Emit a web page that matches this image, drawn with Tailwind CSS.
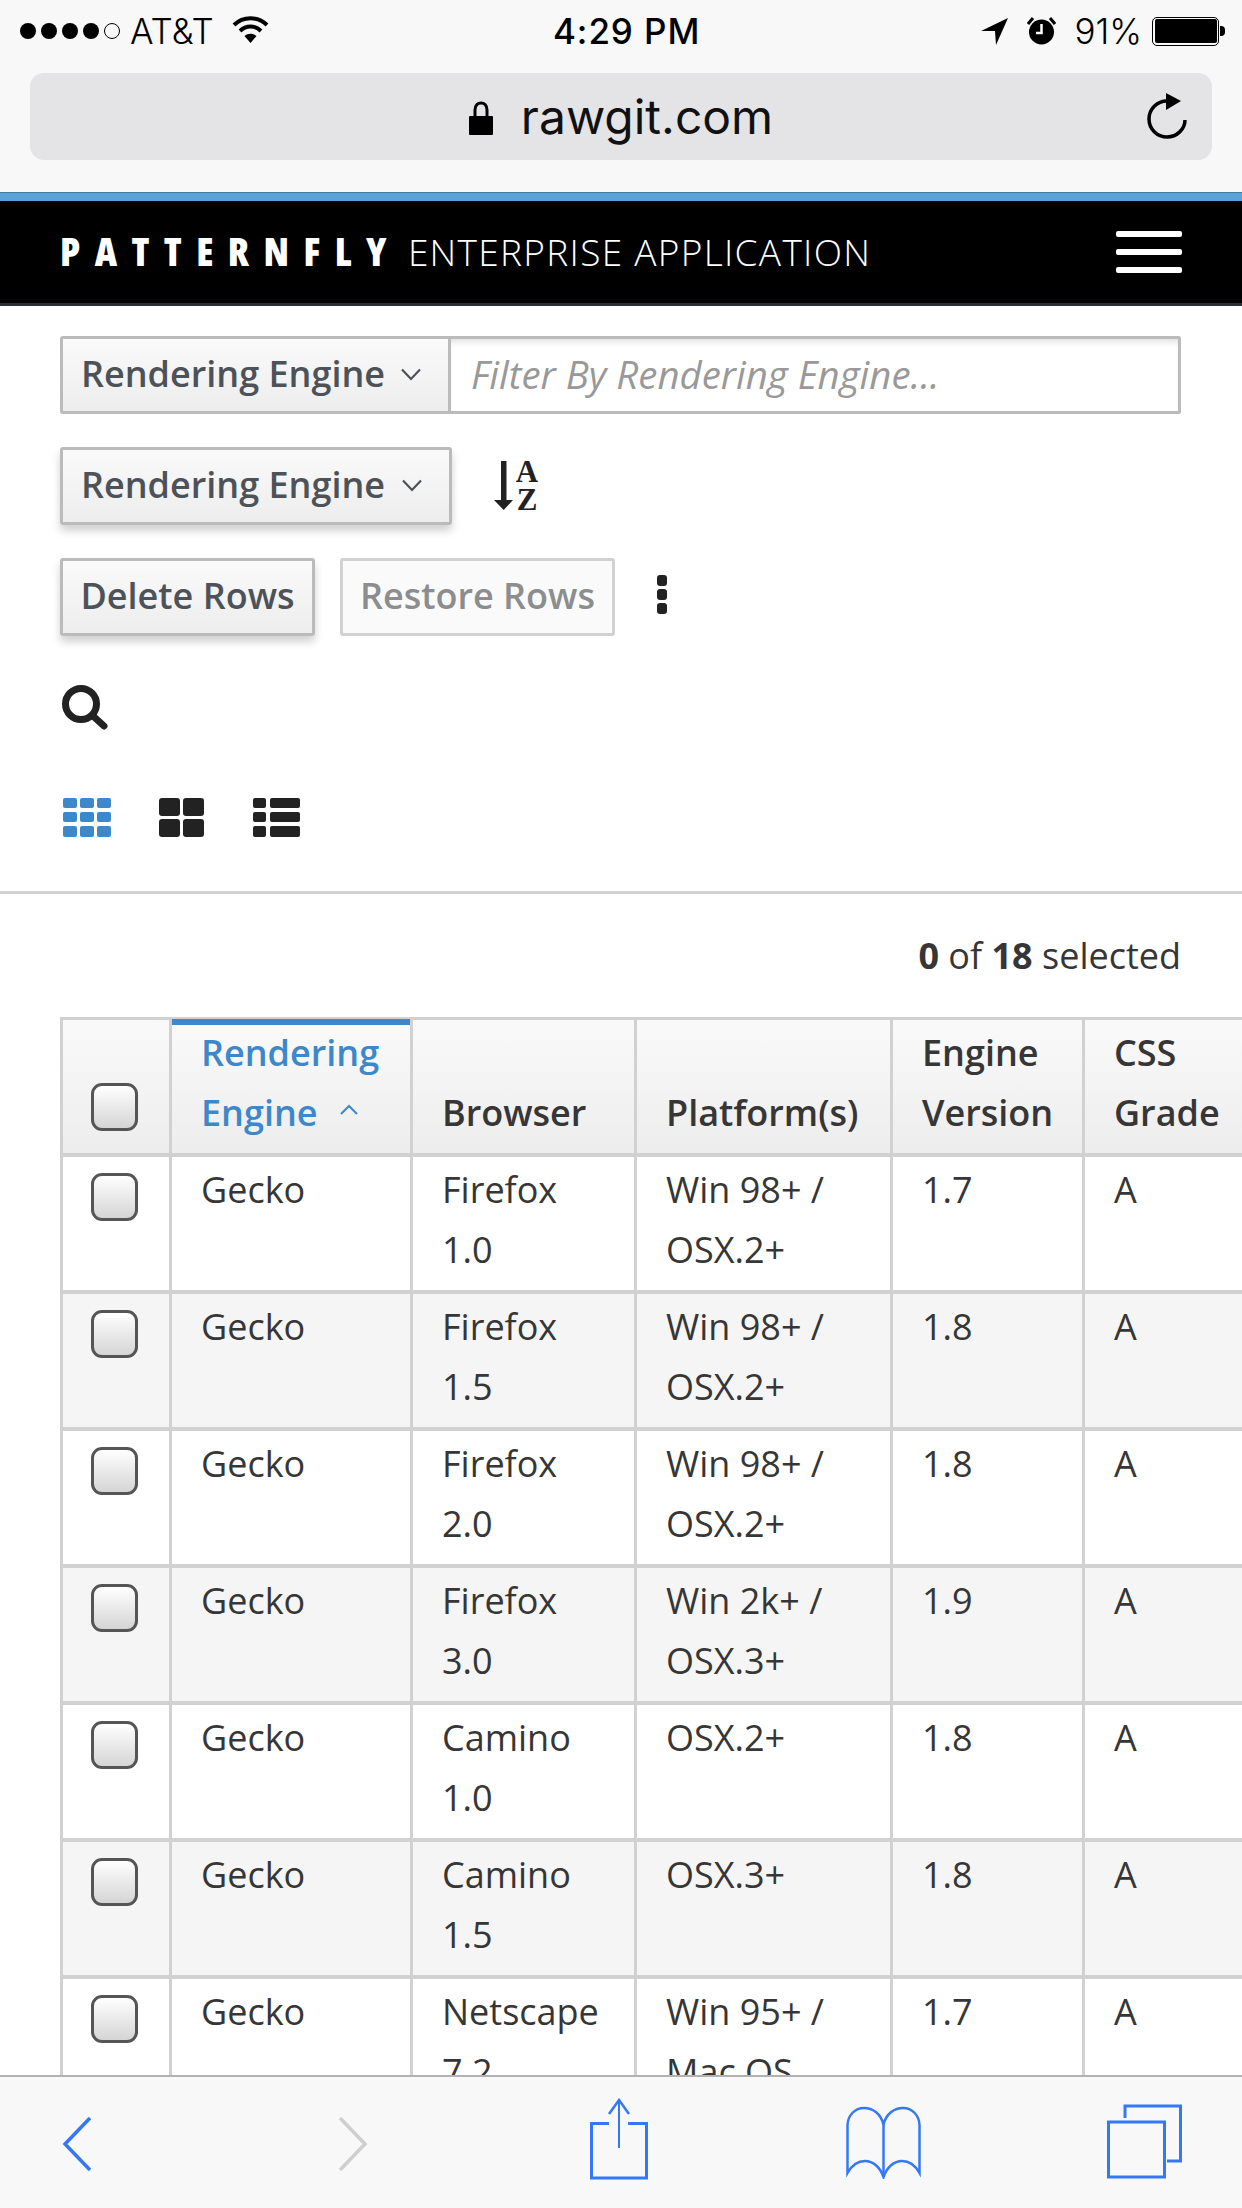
<!DOCTYPE html>
<html lang="en">
<head>
    <meta charset="UTF-8">
    <meta name="viewport" content="width=device-width, initial-scale=1.0">
    <title>Patternfly Table View</title>
    <script src="https://cdn.jsdelivr.net/npm/@tailwindcss/browser@4"></script>
</head>
<body class="bg-white font-['Open_Sans',sans-serif] text-[36px] leading-[60px] text-[#363636]">
<div class="w-[1242px] h-[2208px] flex flex-col overflow-hidden">

    <!-- safari top chrome -->
    <div class="h-[192px] shrink-0 bg-[#f8f8f8] font-['Inter',sans-serif] text-black">
        <div class="h-[62px] relative flex items-center justify-between pl-[20px] pr-[17px] text-[35px] leading-[40px]">
            <div class="flex items-center">
                <div class="flex gap-[5px]">
                    <span class="w-[16px] h-[16px] rounded-full bg-black"></span>
                    <span class="w-[16px] h-[16px] rounded-full bg-black"></span>
                    <span class="w-[16px] h-[16px] rounded-full bg-black"></span>
                    <span class="w-[16px] h-[16px] rounded-full bg-black"></span>
                    <span class="w-[16px] h-[16px] rounded-full border border-black"></span>
                </div>
                <span class="ml-[10px] font-light">AT&amp;T</span>
                <svg class="ml-[18px] mb-[3px]" width="37" height="28" viewBox="0 0 37 28" fill="none" stroke="black" stroke-width="4">
                    <path d="M2 9 C11 0 26 0 35 9"/>
                    <path d="M8 15 C14 9 23 9 29 15"/>
                    <path d="M18.5 27 L12.5 20 C16 17 21 17 24.5 20 Z" fill="black" stroke="none"/>
                </svg>
            </div>
            <span class="absolute left-[553px] font-medium tracking-[0.9px]">4:29 PM</span>
            <div class="flex items-center">
                <svg width="27" height="27" viewBox="0 0 27 27"><path d="M0 13 L27 0 L15 27 L14 13 Z" fill="black"/></svg>
                <svg class="ml-[19px]" width="29" height="28" viewBox="0 0 29 28">
                    <circle cx="14.5" cy="15" r="12.5" fill="black"/>
                    <path d="M14.5 7 V16 H9" fill="none" stroke="white" stroke-width="2.5"/>
                    <path d="M1 7 L6 1 M28 7 L23 1" stroke="black" stroke-width="3"/>
                </svg>
                <span class="ml-[18px] font-light">91%</span>
                <div class="ml-[10px] w-[67px] h-[29px] border-[1.5px] border-black rounded-[5px] p-[1.5px]">
                    <div class="w-full h-full bg-black rounded-[2px]"></div>
                </div>
                <div class="ml-px w-[5px] h-[10px] bg-black rounded-r-[4px]"></div>
            </div>
        </div>
        <div class="mt-[11px] mx-[30px] h-[87px] relative rounded-[14px] bg-[#e4e4e6] flex items-center justify-center">
            <svg class="mr-[28px] mt-[2px]" width="24" height="34" viewBox="0 0 24 34">
                <path d="M6 17 V9 C6 -0.5 18 -0.5 18 9 V17" fill="none" stroke="black" stroke-width="3"/>
                <rect x="0" y="15" width="24" height="19" rx="1" fill="black"/>
            </svg>
            <span class="text-[48px] leading-[60px] text-[#111]">rawgit.com</span>
            <svg class="absolute right-[25px] top-[20px]" width="40" height="46" viewBox="0 0 40 46" fill="none" stroke="black" stroke-width="3.5">
                <path d="M20 8 C10 8 2 16 2 26 C2 36 10 44 20 44 C30 44 38 36 38 27"/>
                <path d="M19 0 L34 8 L19 17 Z" fill="black" stroke="none"/>
            </svg>
        </div>
    </div>

    <!-- masthead -->
    <div class="h-[9px] shrink-0 bg-[#5aa3d8] border-t border-[#44789e]"></div>
    <div class="h-[105px] shrink-0 bg-black border-b-[3px] border-[#292e34] pl-[60px] pr-[60px] flex items-center justify-between text-white">
        <div class="flex items-baseline mb-[1px]">
            <span class="font-extrabold text-[39px] [font-stretch:75%] tracking-[14.4px]">PATTERNFLY</span>
            <span class="ml-[7px] font-light text-[37px] tracking-[1.3px]">ENTERPRISE APPLICATION</span>
        </div>
        <div class="flex flex-col gap-[12px]">
            <span class="w-[66px] h-[6px] rounded-[2px] bg-white"></span>
            <span class="w-[66px] h-[6px] rounded-[2px] bg-white"></span>
            <span class="w-[66px] h-[6px] rounded-[2px] bg-white"></span>
        </div>
    </div>

    <!-- page content -->
    <div class="flex-1 min-h-0 overflow-hidden">
        <div class="px-[60px] pt-[30px]">
            <div class="flex w-[1121px] h-[78px]">
                <button class="w-[391px] h-full shrink-0 flex items-center justify-between pl-[18px] pr-[27px] pb-[2px] border-[3px] border-[#bbb] rounded-l-[3px] bg-linear-to-b from-[#fafafa] to-[#ededed] text-[#4d5258] font-semibold">
                    Rendering Engine
                    <svg width="20" height="13" viewBox="0 0 20 13" fill="none" stroke="#4d5258" stroke-width="2.2"><path d="M1 1.5 L10 11 L19 1.5"/></svg>
                </button>
                <input type="text" placeholder="Filter By Rendering Engine..." class="flex-1 min-w-0 pl-[20px] pb-[3px] text-[38.4px] border-y-[3px] border-r-[3px] border-[#bbb] rounded-r-[3px] bg-white shadow-[inset_0_6px_6px_-3px_rgba(0,0,0,0.12)] placeholder:text-[#999] placeholder:italic outline-none">
            </div>
            <div class="flex items-center mt-[33px]">
                <button class="w-[392px] h-[78px] flex items-center justify-between pl-[18px] pr-[27px] pb-[2px] border-[3px] border-[#bbb] rounded-[3px] bg-linear-to-b from-[#fafafa] to-[#ededed] shadow-[0_6px_9px_rgba(0,0,0,0.18)] text-[#4d5258] font-semibold">
                    Rendering Engine
                    <svg width="20" height="13" viewBox="0 0 20 13" fill="none" stroke="#4d5258" stroke-width="2.2"><path d="M1 1.5 L10 11 L19 1.5"/></svg>
                </button>
                <svg class="ml-[42px] overflow-visible" width="46" height="50" viewBox="0 0 46 50">
                    <path d="M7 0 H12.5 V39 H19 L9.7 49 L0 39 H7 Z" fill="#222"/>
                    <text x="33" y="21" text-anchor="middle" font-family="Liberation Serif" font-weight="700" font-size="31" fill="#222">A</text>
                    <text x="33" y="49" text-anchor="middle" font-family="Liberation Serif" font-weight="700" font-size="31" fill="#222">Z</text>
                </svg>
            </div>
            <div class="flex items-center mt-[33px]">
                <button class="w-[255px] h-[78px] pb-[2px] border-[3px] border-[#bbb] rounded-[3px] bg-linear-to-b from-[#fafafa] to-[#ededed] shadow-[0_6px_9px_rgba(0,0,0,0.18)] text-[#4d5258] font-semibold">Delete Rows</button>
                <button class="ml-[25px] w-[275px] h-[78px] pb-[2px] border-[3px] border-[#d1d1d1] rounded-[3px] bg-[#fafafa] text-[#8b8d8f] font-semibold">Restore Rows</button>
                <div class="ml-[42px] mb-[5px] flex flex-col gap-[3px]">
                    <span class="w-[10px] h-[11px] rounded-[3px] bg-[#222]"></span>
                    <span class="w-[10px] h-[11px] rounded-[3px] bg-[#222]"></span>
                    <span class="w-[10px] h-[11px] rounded-[3px] bg-[#222]"></span>
                </div>
            </div>
            <svg class="mt-[49px] ml-[2px]" width="46" height="45" viewBox="0 0 46 45" fill="none" stroke="#222">
                <circle cx="19" cy="19" r="15.5" stroke-width="7"/>
                <path d="M31 31 L42 41" stroke-width="7" stroke-linecap="round"/>
            </svg>
            <div class="mt-[68px] ml-[3px] flex h-[39px]">
                <svg width="48" height="39" viewBox="0 0 48 39" fill="#3d87cb">
                    <rect x="0" y="0" width="14" height="10" rx="2"/><rect x="17" y="0" width="14" height="10" rx="2"/><rect x="34" y="0" width="14" height="10" rx="2"/>
                    <rect x="0" y="14" width="14" height="10" rx="2"/><rect x="17" y="14" width="14" height="10" rx="2"/><rect x="34" y="14" width="14" height="10" rx="2"/>
                    <rect x="0" y="28" width="14" height="11" rx="2"/><rect x="17" y="28" width="14" height="11" rx="2"/><rect x="34" y="28" width="14" height="11" rx="2"/>
                </svg>
                <svg class="ml-[48px]" width="45" height="39" viewBox="0 0 45 39" fill="#222">
                    <rect x="0" y="0" width="21" height="18" rx="3"/><rect x="24" y="0" width="21" height="18" rx="3"/>
                    <rect x="0" y="21" width="21" height="18" rx="3"/><rect x="24" y="21" width="21" height="18" rx="3"/>
                </svg>
                <svg class="ml-[49px]" width="47" height="39" viewBox="0 0 47 39" fill="#222">
                    <rect x="0" y="0" width="13" height="10" rx="2"/><rect x="17" y="0" width="30" height="10" rx="2"/>
                    <rect x="0" y="14" width="13" height="10" rx="2"/><rect x="17" y="14" width="30" height="10" rx="2"/>
                    <rect x="0" y="28" width="13" height="11" rx="2"/><rect x="17" y="28" width="30" height="11" rx="2"/>
                </svg>
            </div>
        </div>

        <div class="mt-[54px] border-t-[3px] border-[#d1d1d1]"></div>

        <div class="mt-[32px] pr-[61px] text-right"><b class="font-bold">0</b> of <b class="font-bold">18</b> selected</div>

        <div class="mt-[31px] ml-[60px]">
            <table class="table-fixed w-[1238px] border-separate border-spacing-0 [&_th]:relative [&_th]:align-bottom [&_th]:text-left [&_th]:font-semibold [&_th]:pl-[29px] [&_th]:pr-[25px] [&_th]:pb-[10px] [&_th]:h-[140px] [&_th]:border-t-[3px] [&_th]:border-r-[3px] [&_th]:border-b-[4px] [&_th]:border-[#d1d1d1] [&_th]:bg-linear-to-b [&_th]:from-[#fafafa] [&_th]:to-[#ededed] [&_th:first-child]:border-l-[3px] [&_td]:align-top [&_td]:pl-[29px] [&_td]:pr-[25px] [&_td]:pt-[3px] [&_td]:h-[137px] [&_td]:border-r-[3px] [&_td]:border-b-[4px] [&_td]:border-[#d1d1d1] [&_td:first-child]:border-l-[3px] [&_tbody_tr:nth-child(even)]:bg-[#f5f5f5]">
                <colgroup>
                    <col class="w-[112px]"><col class="w-[241px]"><col class="w-[224px]"><col class="w-[256px]"><col class="w-[192px]"><col class="w-[213px]">
                </colgroup>
                <thead>
                    <tr>
                        <th><input type="checkbox" class="appearance-none block -ml-px mb-[12px] w-[47px] h-[48px] border-[3px] border-[#555] rounded-[11px] bg-linear-to-b from-white to-[#d5d5d5]"></th>
                        <th class="text-[#3d87cb]">
                            <span class="absolute left-0 right-0 -top-px h-[6px] bg-[#3d87cb]"></span>
                            Rendering Engine<svg class="inline-block ml-[22px] mb-[14px]" width="18" height="11" viewBox="0 0 18 11" fill="none" stroke="#3d87cb" stroke-width="2"><path d="M1 10 L9 2 L17 10"/></svg>
                        </th>
                        <th>Browser</th>
                        <th>Platform(s)</th>
                        <th>Engine Version</th>
                        <th>CSS Grade</th>
                    </tr>
                </thead>
                <tbody>
                    <tr>
                        <td><input type="checkbox" class="appearance-none block -ml-px mt-[13px] w-[47px] h-[48px] border-[3px] border-[#555] rounded-[11px] bg-linear-to-b from-white to-[#d5d5d5]"></td>
                        <td>Gecko</td><td>Firefox 1.0</td><td>Win 98+ / OSX.2+</td><td>1.7</td><td>A</td>
                    </tr>
                    <tr>
                        <td><input type="checkbox" class="appearance-none block -ml-px mt-[13px] w-[47px] h-[48px] border-[3px] border-[#555] rounded-[11px] bg-linear-to-b from-white to-[#d5d5d5]"></td>
                        <td>Gecko</td><td>Firefox 1.5</td><td>Win 98+ / OSX.2+</td><td>1.8</td><td>A</td>
                    </tr>
                    <tr>
                        <td><input type="checkbox" class="appearance-none block -ml-px mt-[13px] w-[47px] h-[48px] border-[3px] border-[#555] rounded-[11px] bg-linear-to-b from-white to-[#d5d5d5]"></td>
                        <td>Gecko</td><td>Firefox 2.0</td><td>Win 98+ / OSX.2+</td><td>1.8</td><td>A</td>
                    </tr>
                    <tr>
                        <td><input type="checkbox" class="appearance-none block -ml-px mt-[13px] w-[47px] h-[48px] border-[3px] border-[#555] rounded-[11px] bg-linear-to-b from-white to-[#d5d5d5]"></td>
                        <td>Gecko</td><td>Firefox 3.0</td><td>Win 2k+ / OSX.3+</td><td>1.9</td><td>A</td>
                    </tr>
                    <tr>
                        <td><input type="checkbox" class="appearance-none block -ml-px mt-[13px] w-[47px] h-[48px] border-[3px] border-[#555] rounded-[11px] bg-linear-to-b from-white to-[#d5d5d5]"></td>
                        <td>Gecko</td><td>Camino 1.0</td><td>OSX.2+</td><td>1.8</td><td>A</td>
                    </tr>
                    <tr>
                        <td><input type="checkbox" class="appearance-none block -ml-px mt-[13px] w-[47px] h-[48px] border-[3px] border-[#555] rounded-[11px] bg-linear-to-b from-white to-[#d5d5d5]"></td>
                        <td>Gecko</td><td>Camino 1.5</td><td>OSX.3+</td><td>1.8</td><td>A</td>
                    </tr>
                    <tr>
                        <td><input type="checkbox" class="appearance-none block -ml-px mt-[13px] w-[47px] h-[48px] border-[3px] border-[#555] rounded-[11px] bg-linear-to-b from-white to-[#d5d5d5]"></td>
                        <td>Gecko</td><td>Netscape 7.2</td><td>Win 95+ / Mac OS <span class="whitespace-nowrap">8.6-9.2</span></td><td>1.7</td><td>A</td>
                    </tr>
                </tbody>
            </table>
        </div>
    </div>

    <!-- safari bottom toolbar -->
    <div class="h-[133px] shrink-0 bg-[#f8f8f8] border-t-[2px] border-[#b2b2b2] relative">
        <svg class="absolute left-[62px] top-[39px]" width="30" height="56" viewBox="0 0 30 56" fill="none" stroke="#3478f6" stroke-width="3.5"><path d="M28 2 L3 28 L28 54"/></svg>
        <svg class="absolute left-[338px] top-[39px]" width="30" height="56" viewBox="0 0 30 56" fill="none" stroke="#cfcfcf" stroke-width="3.5"><path d="M2 2 L27 28 L2 54"/></svg>
        <svg class="absolute left-[590px] top-[21px]" width="58" height="82" viewBox="0 0 58 82" fill="none" stroke="#3478f6" stroke-width="3">
            <path d="M19 25.5 H1.5 V80 H56.5 V25.5 H38"/>
            <path d="M29 3 V50" stroke-width="2"/>
            <path d="M19 16 L29 2 L39 16" stroke-width="2.5"/>
        </svg>
        <svg class="absolute left-[846px] top-[29px]" width="75" height="73" viewBox="0 0 75 73" fill="none" stroke="#3478f6" stroke-width="2.5">
            <path d="M37.5 19 C35 7 26 2 18 2 C9 2 2 9 1.5 19 V67 C6 59 12 55 19 55 C27 55 34 61 37.5 71 C41 61 48 55 56 55 C63 55 69 59 73.5 67 V19 C73 9 66 2 57 2 C49 2 40 7 37.5 19 Z"/>
            <path d="M37.5 19 V71"/>
        </svg>
        <svg class="absolute left-[1107px] top-[27px]" width="75" height="75" viewBox="0 0 75 75" fill="none" stroke="#3478f6" stroke-width="3">
            <path d="M18 14 V2 H73.5 V57 H60"/>
            <rect x="1.5" y="18" width="56" height="55"/>
        </svg>
    </div>
</div>
</body>
</html>
